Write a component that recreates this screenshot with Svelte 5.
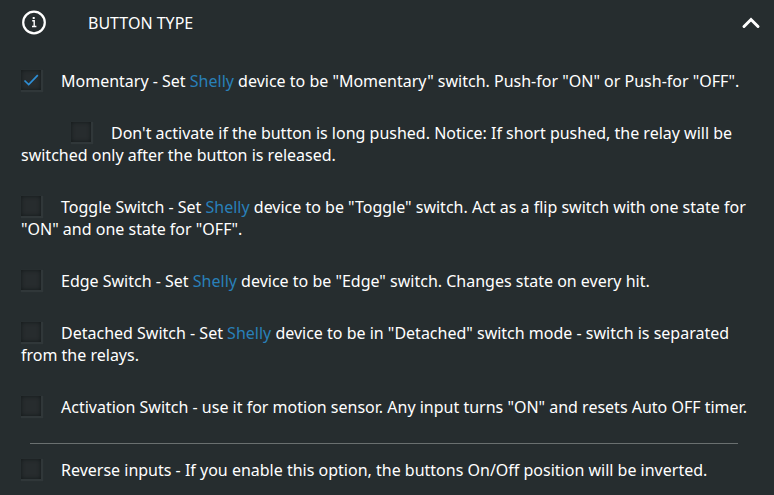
<script lang="ts">
	interface Option {
		id: string;
		before: string;
		brand?: string;
		after?: string;
		checked: boolean;
		nested?: boolean;
	}

	let options: Option[] = $state([
		{
			id: 'momentary',
			before: 'Momentary - Set ',
			brand: 'Shelly',
			after: ' device to be "Momentary" switch. Push-for "ON" or Push-for "OFF".',
			checked: true
		},
		{
			id: 'long-push',
			before:
				"Don't activate if the button is long pushed. Notice: If short pushed, the relay will be switched only after the button is released.",
			checked: false,
			nested: true
		},
		{
			id: 'toggle',
			before: 'Toggle Switch - Set ',
			brand: 'Shelly',
			after:
				' device to be "Toggle" switch. Act as a flip switch with one state for "ON" and one state for "OFF".',
			checked: false
		},
		{
			id: 'edge',
			before: 'Edge Switch - Set ',
			brand: 'Shelly',
			after: ' device to be "Edge" switch. Changes state on every hit.',
			checked: false
		},
		{
			id: 'detached',
			before: 'Detached Switch - Set ',
			brand: 'Shelly',
			after: ' device to be in "Detached" switch mode - switch is separated from the relays.',
			checked: false
		},
		{
			id: 'activation',
			before:
				'Activation Switch - use it for motion sensor. Any input turns "ON" and resets Auto OFF timer.',
			checked: false
		}
	]);

	let reverse: Option = $state({
		id: 'reverse',
		before:
			'Reverse inputs - If you enable this option, the buttons On/Off position will be inverted.',
		checked: false
	});

	let open = $state(true);
</script>

{#snippet row(option: Option)}
	<label class="option" class:nested={option.nested}>
		<input type="checkbox" bind:checked={option.checked} />
		<span class="box">
			{#if option.checked}
				<svg viewBox="0 0 20 20" width="20" height="20">
					<path d="M3.5 10.5l4.2 4L16.8 5.2" />
				</svg>
			{/if}
		</span>{option.before}{#if option.brand}<span class="brand">{option.brand}</span>{/if}{option.after ?? ''}
	</label>
{/snippet}

<section class="panel">
	<button class="header" onclick={() => (open = !open)} aria-expanded={open}>
		<svg class="info" viewBox="0 0 26 26" width="26" height="26">
			<circle cx="13" cy="12.5" r="10.8" />
			<path d="M11.2 10.8h2v5.4M11 16.5h4.4" />
			<rect x="11.7" y="7" width="2" height="2" />
		</svg>
		<span class="title">BUTTON TYPE</span>
		<svg class="chevron" class:closed={!open} viewBox="0 0 20 14" width="20" height="14">
			<path d="M3 10.5l7-7 7 7" />
		</svg>
	</button>

	{#if open}
		<div class="options">
			{#each options as option (option.id)}
				{@render row(option)}
			{/each}
			<hr />
			{@render row(reverse)}
		</div>
	{/if}
</section>

<style>
	:global(body) {
		background: #262d2f;
	}
	.panel {
		box-sizing: border-box;
		width: 774px;
		height: 495px;
		overflow: hidden;
		background: #262d2f;
		color: #fff;
		font-family: 'Noto Sans', sans-serif;
		font-size: 16px;
		line-height: 22px;
	}
	.header {
		display: flex;
		align-items: center;
		width: 100%;
		height: 46px;
		padding: 0 13px 0 21px;
		border: none;
		background: none;
		color: inherit;
		font: inherit;
		cursor: pointer;
	}
	.info {
		fill: none;
		stroke: #fff;
		stroke-width: 2.2;
	}
	.info path {
		stroke-width: 1.4;
	}
	.info rect {
		fill: #fff;
		stroke: none;
	}
	.title {
		flex: 1;
		margin-left: 41px;
		text-align: left;
	}
	.chevron {
		fill: none;
		stroke: #fff;
		stroke-width: 3;
		stroke-linecap: round;
	}
	.closed {
		transform: rotate(180deg);
	}
	.options {
		display: flex;
		flex-direction: column;
		gap: 30px;
		padding: 24px 21px 0;
	}
	.option {
		display: block;
		cursor: pointer;
	}
	.nested {
		text-indent: 50px;
	}
	.option input {
		display: none;
	}
	.box {
		display: inline-block;
		width: 20px;
		height: 20px;
		margin-right: 20px;
		background: #272c2e;
		box-shadow:
			inset 0 0 4px #131819,
			1px 1px 1px 1px #303739;
		vertical-align: top;
		text-indent: 0;
	}
	.box svg {
		display: block;
		fill: none;
		stroke: #2e8fd6;
		stroke-width: 1.7;
	}
	.brand {
		color: #2980b9;
	}
	hr {
		width: 708px;
		height: 1px;
		margin: -5px 0 -15px 9px;
		border: none;
		background: #6a7070;
	}
</style>
